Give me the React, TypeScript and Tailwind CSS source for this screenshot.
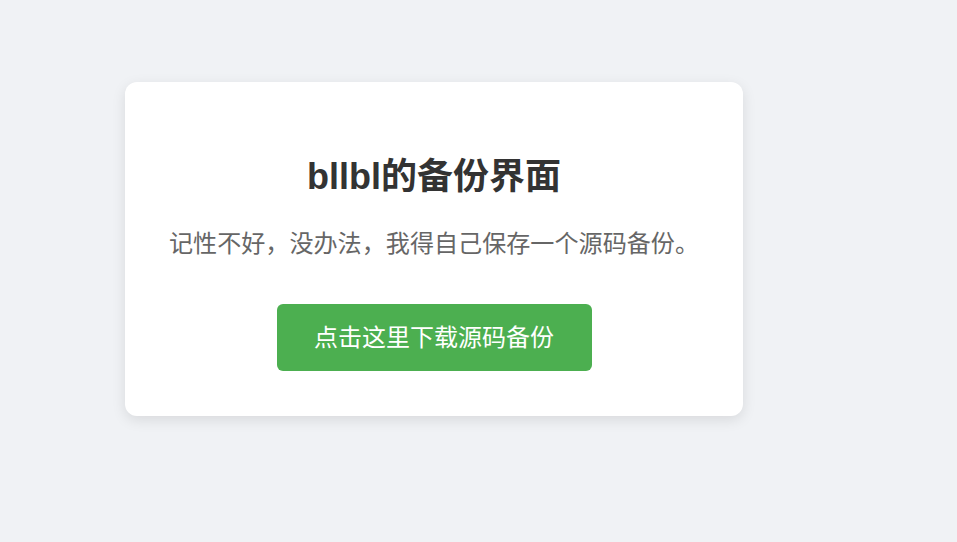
export default function App() {
  return (
    <div className="min-h-[542px] w-full bg-[#f0f2f5] pt-[82px] pl-[125px] font-['Liberation_Sans','Noto_Sans_CJK_SC',sans-serif]">
      <div className="flex w-[618px] flex-col items-center rounded-xl bg-white px-5 pt-[73px] pb-[45px] shadow-[0_4px_14px_rgba(0,0,0,0.1)]">
        <h1 className="text-[36px] leading-[44px] font-bold text-[#333]">bllbl的备份界面</h1>
        <p className="mt-[27px] whitespace-nowrap text-[24.1px] leading-[36px] text-[#666]">
          记性不好，没办法，我得自己保存一个源码备份。
        </p>
        <button className="mt-[42px] h-[67px] w-[315px] rounded-md bg-[#4caf50] text-[24px] text-white">
          点击这里下载源码备份
        </button>
      </div>
    </div>
  );
}
